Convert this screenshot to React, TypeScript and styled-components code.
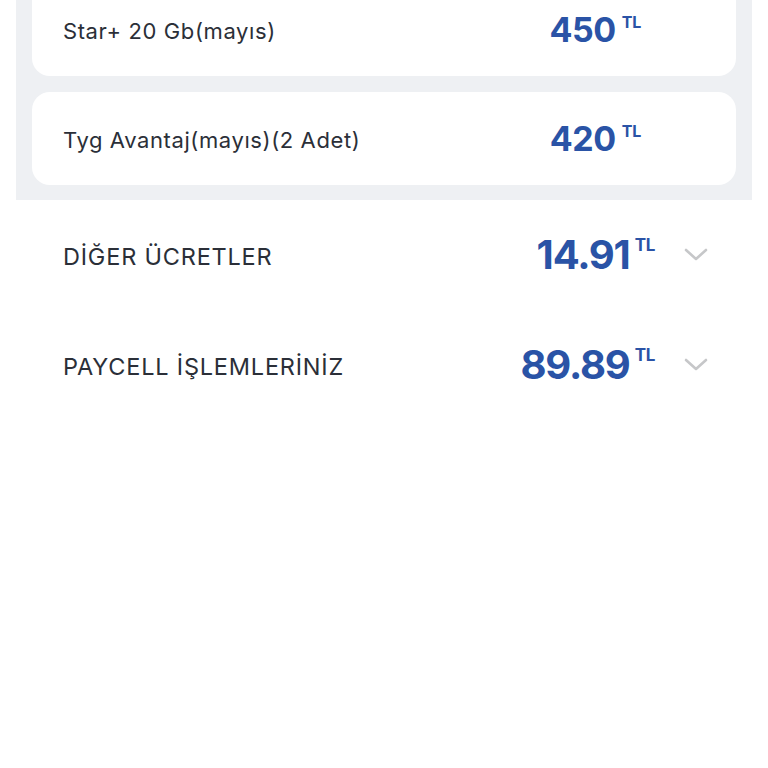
import React from "react";
import styled, { createGlobalStyle } from "styled-components";

const Global = createGlobalStyle`
  html, body { margin: 0; padding: 0; background: #ffffff; }
  body { font-family: Inter, "Open Sans", sans-serif; color: #2b2f38; }
`;

const Page = styled.div`
  width: 768px;
  overflow: hidden;
`;

const Panel = styled.section`
  margin: -33px 16px 0;
  padding: 16px 16px 15px;
  background: #eef0f3;
  display: flex;
  flex-direction: column;
  gap: 16px;
`;

const Card = styled.div`
  height: 93px;
  background: #ffffff;
  border-radius: 18px;
  display: flex;
  align-items: center;
  padding: 0 95px 0 31px;
`;

const Label = styled.span<{ $caps?: boolean }>`
  flex: 1;
  font-size: ${(p) => (p.$caps ? "23.5px" : "22px")};
  color: #2b2f38;
  letter-spacing: ${(p) => (p.$caps ? "0.8px" : "0.6px")};
  padding-top: 2px;
`;

const Amount = styled.div`
  display: flex;
  align-items: flex-start;
  color: #2a53a6;
  font-weight: 700;
`;

const Num = styled.span<{ $big?: boolean }>`
  font-size: ${(p) => (p.$big ? "40px" : "34px")};
  line-height: 1;
  letter-spacing: ${(p) => (p.$big ? "-1.2px" : "-0.4px")};
`;

const Cur = styled.span<{ $big?: boolean }>`
  font-size: ${(p) => (p.$big ? "17px" : "16px")};
  line-height: 1;
  margin-left: ${(p) => (p.$big ? "5px" : "6px")};
  margin-top: ${(p) => (p.$big ? "2px" : "1px")};
  letter-spacing: -0.3px;
`;

const Row = styled.div`
  height: 110px;
  display: flex;
  align-items: center;
  padding: 0 60px 0 63px;
`;

const Chevron = styled.svg`
  width: 24px;
  height: 14px;
  margin-left: 29px;
  flex: none;
`;

const ChevronIcon = () => (
  <Chevron viewBox="0 0 24 14">
    <path d="M2 2 L12 11 L22 2" fill="none" stroke="#c6c7c9" strokeWidth="2.6" strokeLinecap="round" strokeLinejoin="round" />
  </Chevron>
);

const cards = [
  { label: "Star+ 20 Gb(mayıs)", value: "450" },
  { label: "Tyg Avantaj(mayıs)(2 Adet)", value: "420" },
];

const rows = [
  { label: "DİĞER ÜCRETLER", value: "14.91" },
  { label: "PAYCELL İŞLEMLERİNİZ", value: "89.89" },
];

export default function App() {
  return (
    <Page>
      <Global />
      <Panel>
        {cards.map((c) => (
          <Card key={c.label}>
            <Label>{c.label}</Label>
            <Amount>
              <Num>{c.value}</Num>
              <Cur>TL</Cur>
            </Amount>
          </Card>
        ))}
      </Panel>
      {rows.map((r) => (
        <Row key={r.label}>
          <Label $caps>{r.label}</Label>
          <Amount>
            <Num $big>{r.value}</Num>
            <Cur $big>TL</Cur>
          </Amount>
          <ChevronIcon />
        </Row>
      ))}
    </Page>
  );
}
